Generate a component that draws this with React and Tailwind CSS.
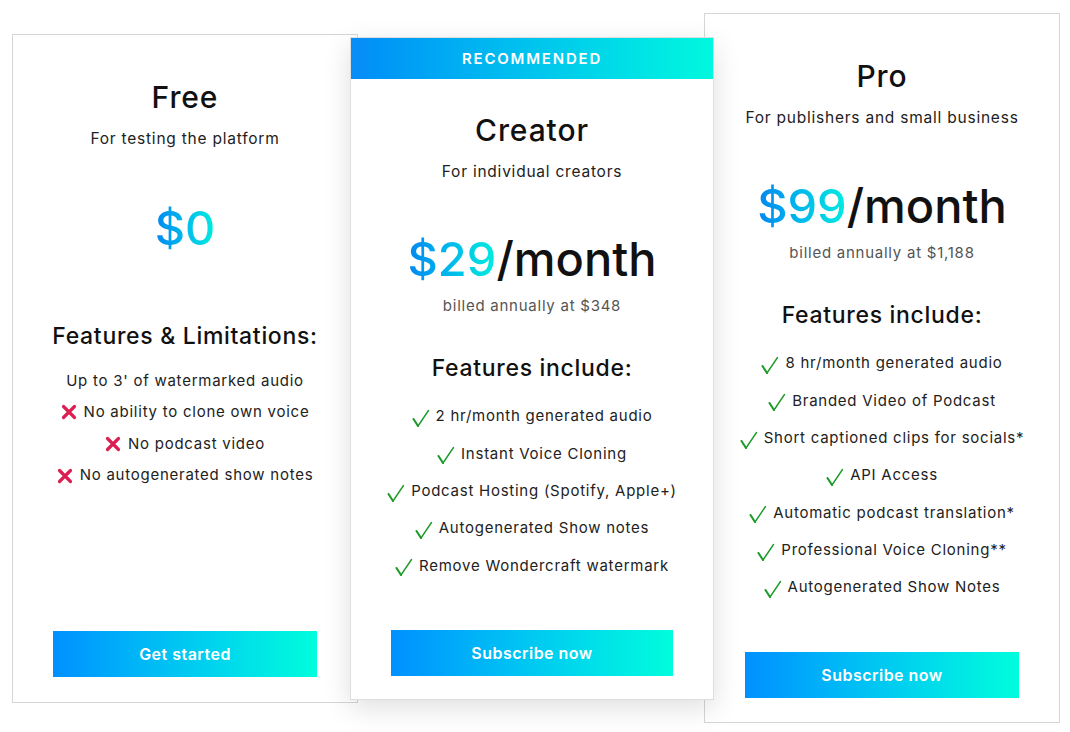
import React from 'react';

const font = { fontFamily: 'Inter, "Noto Sans", sans-serif' };

function Check() {
  return (
    <svg width="18" height="19" viewBox="0 0 18 19" className="shrink-0 mt-[4px]">
      <path d="M1.5 10 L6 17" stroke="#1f9b2a" strokeWidth="2.1" strokeLinecap="round" fill="none" />
      <path d="M6 17 L16.5 1.5" stroke="#1f9b2a" strokeWidth="1.4" strokeLinecap="round" fill="none" />
    </svg>
  );
}

function Cross() {
  return (
    <svg width="16" height="16" viewBox="0 0 16 16" className="shrink-0">
      <path d="M2.5 2.5 L13.5 13.5 M13.5 2.5 L2.5 13.5" stroke="#dc1f52" strokeWidth="3.2" strokeLinecap="round" fill="none" />
    </svg>
  );
}

function Price({ amount, month }) {
  return (
    <div className="h-[56px] leading-[56px] text-[47px] font-medium text-[#111]">
      <span className="bg-gradient-to-r from-[#0a86f0] to-[#00ecdf] bg-clip-text text-transparent">{amount}</span>
      {month && <span>/month</span>}
    </div>
  );
}

function Button({ label }) {
  return (
    <button className="mt-auto mx-10 h-[46px] bg-gradient-to-r from-[#0090ff] to-[#00fddc] text-white text-[16px] font-semibold tracking-[0.03em]">
      {label}
    </button>
  );
}

export default function App() {
  return (
    <div className="w-[1070px] h-[732px] bg-white overflow-hidden text-center" style={font}>
      <div className="flex items-start pl-[12px]">
        {/* Free */}
        <div className="mt-[34px] w-[346px] h-[669px] border border-[#d6d6d6] flex flex-col pt-[45px] pb-[25px]">
          <h2 className="h-[34px] leading-[34px] text-[30px] font-medium text-[#111] tracking-[0.03em]">Free</h2>
          <p className="mt-[14px] h-[22px] leading-[22px] text-[15.5px] text-[#222] tracking-[0.05em]">For testing the platform</p>
          <div className="mt-[50px]">
            <Price amount="$0" />
          </div>
          <div className="h-[30px]" />
          <h3 className="mt-[35px] h-[30px] leading-[30px] text-[23px] font-medium text-[#111] tracking-[0.03em]">Features &amp; Limitations:</h3>
          <ul className="mt-[14px] text-[15px] text-[#222] tracking-[0.05em]">
            <li className="h-[31.6px] flex items-center justify-center">Up to 3' of watermarked audio</li>
            {['No ability to clone own voice', 'No podcast video', 'No autogenerated show notes'].map((t) => (
              <li key={t} className="h-[31.6px] flex items-center justify-center gap-[7px]">
                <Cross />
                <span>{t}</span>
              </li>
            ))}
          </ul>
          <Button label="Get started" />
        </div>

        {/* Creator */}
        <div className="relative z-10 -ml-[8px] mt-[37px] w-[364px] h-[663px] bg-white border border-[#dedede] shadow-[0_8px_26px_rgba(0,0,0,0.13)] flex flex-col pb-[23px]">
          <div className="h-[41px] leading-[41px] bg-gradient-to-r from-[#0a8cf7] to-[#00f8de] text-white text-[15px] font-semibold tracking-[0.12em]">
            RECOMMENDED
          </div>
          <h2 className="mt-[34px] h-[34px] leading-[34px] text-[30px] font-medium text-[#111] tracking-[0.03em]">Creator</h2>
          <p className="mt-[14px] h-[22px] leading-[22px] text-[15.5px] text-[#222] tracking-[0.05em]">For individual creators</p>
          <div className="mt-[48px]">
            <Price amount="$29" month />
          </div>
          <p className="mt-[8px] h-[22px] leading-[22px] text-[15px] text-[#555] tracking-[0.05em]">billed annually at $348</p>
          <h3 className="mt-[36px] h-[30px] leading-[30px] text-[23px] font-medium text-[#111] tracking-[0.03em]">Features include:</h3>
          <ul className="mt-[15px] text-[15px] text-[#222] tracking-[0.05em]">
            {[
              '2 hr/month generated audio',
              'Instant Voice Cloning',
              'Podcast Hosting (Spotify, Apple+)',
              'Autogenerated Show notes',
              'Remove Wondercraft watermark',
            ].map((t) => (
              <li key={t} className="h-[37.3px] flex items-center justify-center gap-[6px]">
                <Check />
                <span>{t}</span>
              </li>
            ))}
          </ul>
          <Button label="Subscribe now" />
        </div>

        {/* Pro */}
        <div className="-ml-[10px] mt-[13px] w-[356px] h-[710px] border border-[#d6d6d6] flex flex-col pt-[45px] pb-[24px]">
          <h2 className="h-[34px] leading-[34px] text-[30px] font-medium text-[#111] tracking-[0.03em]">Pro</h2>
          <p className="mt-[14px] h-[22px] leading-[22px] text-[15.5px] text-[#222] tracking-[0.05em]">For publishers and small business</p>
          <div className="mt-[49px]">
            <Price amount="$99" month />
          </div>
          <p className="mt-[8px] h-[22px] leading-[22px] text-[15px] text-[#555] tracking-[0.05em]">billed annually at $1,188</p>
          <h3 className="mt-[36px] h-[30px] leading-[30px] text-[23px] font-medium text-[#111] tracking-[0.03em]">Features include:</h3>
          <ul className="mt-[15px] text-[15px] text-[#222] tracking-[0.05em]">
            {[
              '8 hr/month generated audio',
              'Branded Video of Podcast',
              'Short captioned clips for socials*',
              'API Access',
              'Automatic podcast translation*',
              'Professional Voice Cloning**',
              'Autogenerated Show Notes',
            ].map((t) => (
              <li key={t} className="h-[37.3px] flex items-center justify-center gap-[6px]">
                <Check />
                <span>{t}</span>
              </li>
            ))}
          </ul>
          <Button label="Subscribe now" />
        </div>
      </div>
    </div>
  );
}
